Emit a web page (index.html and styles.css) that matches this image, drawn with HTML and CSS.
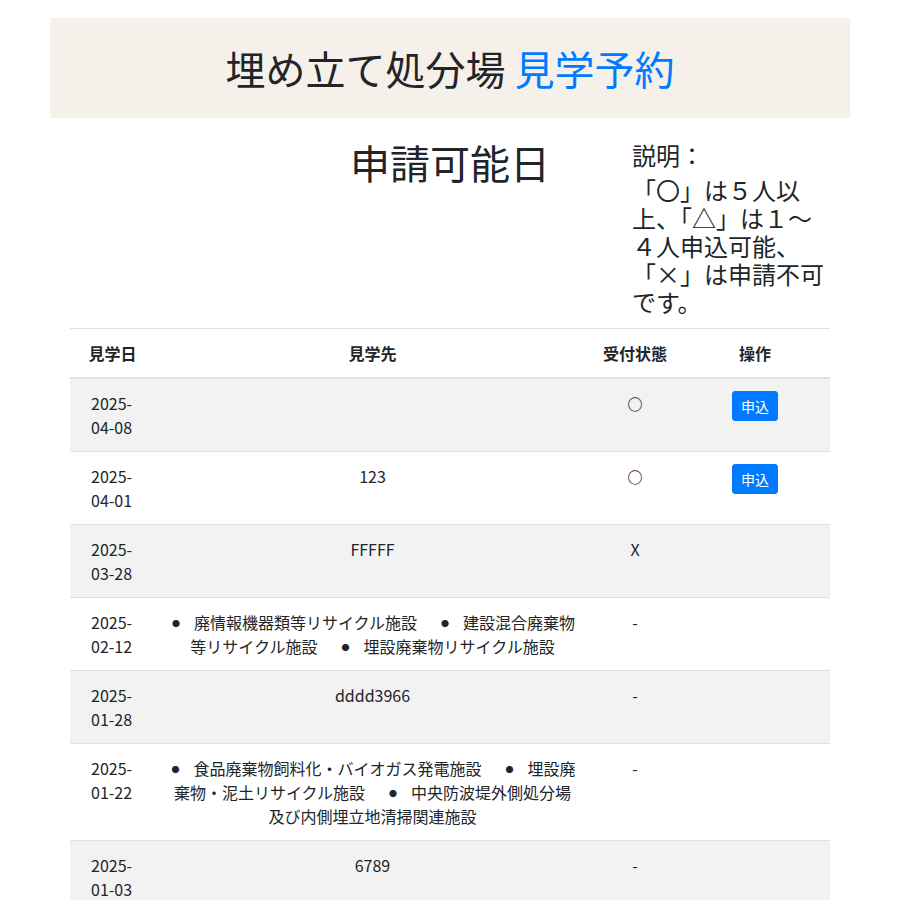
FILE: index.html
```html
<!DOCTYPE html>
<html lang="ja">
<head>
  <meta charset="UTF-8">
  <meta name="viewport" content="width=device-width, initial-scale=1.0">
  <title>埋め立て処分場 見学予約</title>
  <link rel="stylesheet" href="styles.css">
</head>
<body>
  <div class="page">
    <header class="banner">
      <h1>埋め立て処分場 <span class="accent">見学予約</span></h1>
    </header>

    <section class="intro">
      <h2 class="intro-title">申請可能日</h2>
      <div class="legend">
        <p class="legend-label">説明：</p>
        <p class="legend-text">「〇」は５人以上、「△」は１～４人申込可能、「×」は申請不可です。</p>
      </div>
    </section>

    <table class="slots">
      <colgroup>
        <col class="c-date"><col class="c-site"><col class="c-status"><col class="c-action">
      </colgroup>
      <thead>
        <tr><th>見学日</th><th>見学先</th><th>受付状態</th><th>操作</th></tr>
      </thead>
      <tbody>
        <tr>
          <td class="date">2025-<wbr>04-08</td>
          <td></td>
          <td><span class="mark">○</span></td>
          <td><button class="btn-apply">申込</button></td>
        </tr>
        <tr>
          <td class="date">2025-<wbr>04-01</td>
          <td>123</td>
          <td><span class="mark">○</span></td>
          <td><button class="btn-apply">申込</button></td>
        </tr>
        <tr>
          <td class="date">2025-<wbr>03-28</td>
          <td>FFFFF</td>
          <td>X</td>
          <td></td>
        </tr>
        <tr>
          <td class="date">2025-<wbr>02-12</td>
          <td>
            <ul class="sites"><li>廃情報機器類等リサイクル施設</li><li>建設混合廃棄物等リサイクル施設</li><li>埋設廃棄物リサイクル施設</li></ul>
          </td>
          <td>-</td>
          <td></td>
        </tr>
        <tr>
          <td class="date">2025-<wbr>01-28</td>
          <td>dddd3966</td>
          <td>-</td>
          <td></td>
        </tr>
        <tr>
          <td class="date">2025-<wbr>01-22</td>
          <td>
            <ul class="sites"><li>食品廃棄物飼料化・バイオガス発電施設</li><li>埋設廃棄物・泥土リサイクル施設</li><li>中央防波堤外側処分場及び内側埋立地清掃関連施設</li></ul>
          </td>
          <td>-</td>
          <td></td>
        </tr>
        <tr>
          <td class="date">2025-<wbr>01-03</td>
          <td>6789</td>
          <td>-</td>
          <td></td>
        </tr>
      </tbody>
    </table>
  </div>
</body>
</html>
```

FILE: styles.css
```css
body { margin: 0; font-family: "Noto Sans CJK JP", "Noto Sans", sans-serif; color: #212529; background: #fff; }
.page { width: 800px; margin: 18px 0 0 50px; }

/* banner */
.banner { background: #f5f0ea; padding: 26px 0; text-align: center; }
.banner h1 { margin: 0; font-size: 40px; font-weight: 400; line-height: 48px; }
.accent { color: #007bff; }

/* heading + legend */
.intro { display: grid; grid-template-columns: 1fr auto 1fr; padding: 20px 0 12px; }
.intro-title { grid-column: 2; margin: 0; font-size: 40px; font-weight: 400; line-height: 48px; }
.legend { grid-column: 3; justify-self: end; width: 200px; margin: 3px 18px 0 0; font-size: 24px; line-height: 28px; }
.legend-label { margin: 0 0 7px; }
.legend-text { margin: 0; }

/* table */
.slots { width: 760px; margin: 0 20px; border-collapse: collapse; table-layout: fixed; font-size: 16px; line-height: 24px; }
.c-date { width: 85px; }
.c-site { width: 435px; }
.c-status { width: 90px; }
.c-action { width: 150px; }
.slots th, .slots td { padding: 12px; border-top: 1px solid #dee2e6; text-align: center; vertical-align: top; }
.slots th { font-weight: 700; }
.slots thead th { border-bottom: 2px solid #dee2e6; }
.slots tbody tr:nth-child(odd) { background: #f2f2f2; }
.slots td.date { text-align: left; padding-left: 21px; }
.mark { font-size: 15px; font-weight: 700; }

.sites { margin: 0; padding: 0; list-style: none; }
.sites li { display: inline; margin-left: 22px; }
.sites li:first-child { margin-left: 0; }
.sites li::before { content: "●"; display: inline-block; width: 24px; padding-left: 2px; box-sizing: border-box; font-size: 8px; line-height: 16px; vertical-align: 2px; text-align: left; }

.btn-apply { display: inline-block; padding: 4px 8px; font-family: inherit; font-size: 14px; line-height: 20px; color: #fff; background: #007bff; border: 1px solid #007bff; border-radius: 3px; cursor: pointer; }
```
